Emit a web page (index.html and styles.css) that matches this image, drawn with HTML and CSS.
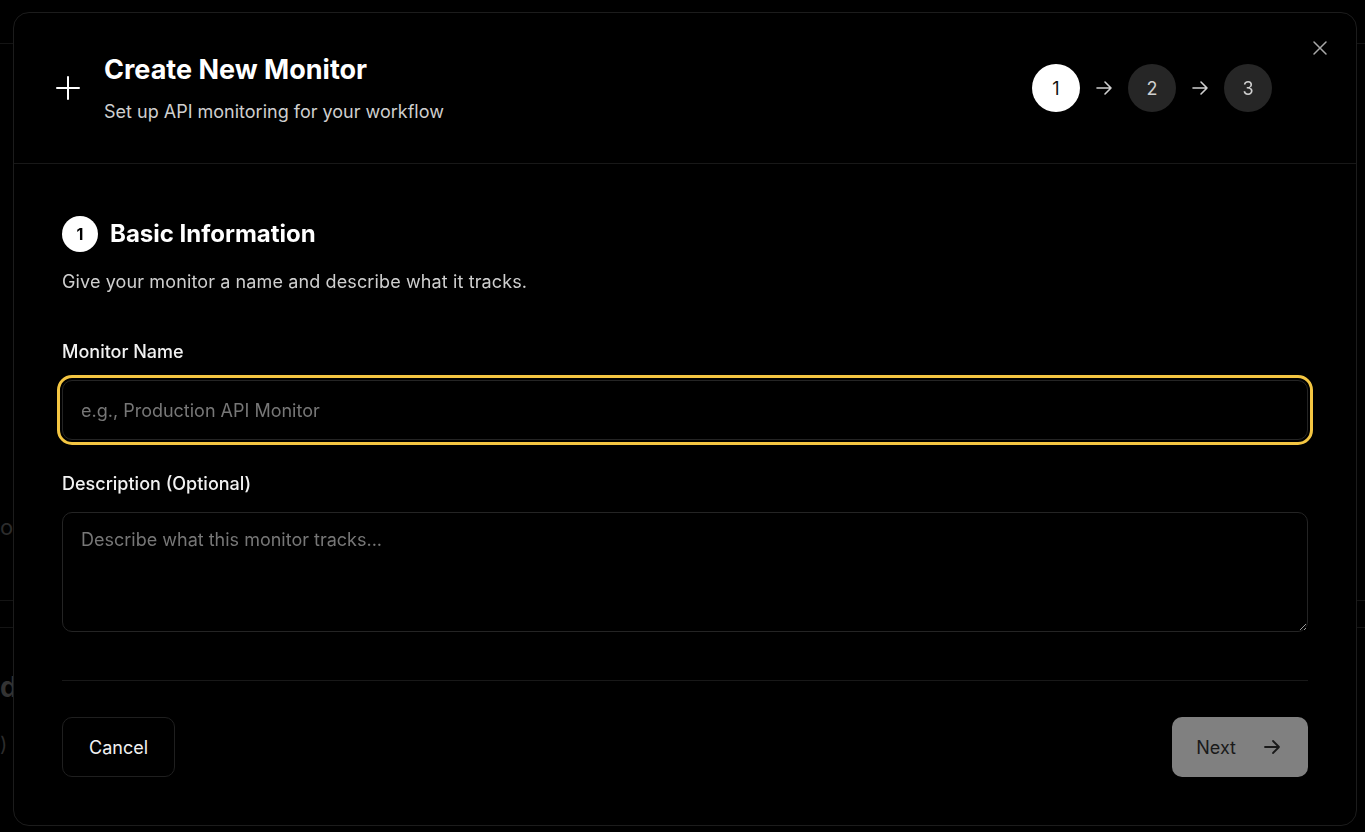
FILE: index.html
```html
<!DOCTYPE html>
<html lang="en">
<head>
    <meta charset="UTF-8">
    <meta name="viewport" content="width=device-width, initial-scale=1.0">
    <title>Create New Monitor</title>
    <link rel="stylesheet" href="styles.css">
</head>
<body>

<div class="page">
    <header class="page-header"></header>
    <main class="page-main">
        <div class="page-row page-row-text">or</div>
        <div class="page-row page-row-lines"></div>
        <div class="page-row page-row-title">d</div>
        <div class="page-row page-row-badge">)</div>
    </main>
</div>

<div class="overlay">
    <div class="modal">
        <button class="close-button" aria-label="Close">
            <svg width="16" height="16" viewBox="0 0 16 16" fill="none" stroke="currentColor" stroke-width="1.5" stroke-linecap="round">
                <path d="M2 2L14 14M14 2L2 14"/>
            </svg>
        </button>

        <div class="modal-header">
            <div class="header-title">
                <svg class="plus-icon" width="24" height="24" viewBox="0 0 24 24" fill="none" stroke="currentColor" stroke-width="2" stroke-linecap="round">
                    <path d="M12 1V23M1 12H23"/>
                </svg>
                <div>
                    <h1>Create New Monitor</h1>
                    <p class="subtitle">Set up API monitoring for your workflow</p>
                </div>
            </div>

            <div class="steps">
                <div class="step active">1</div>
                <svg class="step-arrow" width="18" height="18" viewBox="0 0 18 18" fill="none" stroke="currentColor" stroke-width="1.6" stroke-linecap="round" stroke-linejoin="round">
                    <path d="M2 9H16M10 3L16 9L10 15"/>
                </svg>
                <div class="step">2</div>
                <svg class="step-arrow" width="18" height="18" viewBox="0 0 18 18" fill="none" stroke="currentColor" stroke-width="1.6" stroke-linecap="round" stroke-linejoin="round">
                    <path d="M2 9H16M10 3L16 9L10 15"/>
                </svg>
                <div class="step">3</div>
            </div>
        </div>

        <div class="modal-body">
            <div class="section-title">
                <span class="section-number">1</span>
                <h2>Basic Information</h2>
            </div>
            <p class="section-desc">Give your monitor a name and describe what it tracks.</p>

            <div class="form-group">
                <label for="monitor-name">Monitor Name</label>
                <input type="text" id="monitor-name" class="field field-focus" placeholder="e.g., Production API Monitor">
            </div>

            <div class="form-group">
                <label for="monitor-desc">Description (Optional)</label>
                <textarea id="monitor-desc" class="field field-area" placeholder="Describe what this monitor tracks..."></textarea>
            </div>

            <div class="modal-footer">
                <button class="btn btn-cancel">Cancel</button>
                <button class="btn btn-next">
                    Next
                    <svg width="18" height="18" viewBox="0 0 18 18" fill="none" stroke="currentColor" stroke-width="1.8" stroke-linecap="round" stroke-linejoin="round">
                        <path d="M2 9H16M10 3L16 9L10 15"/>
                    </svg>
                </button>
            </div>
        </div>
    </div>
</div>

</body>
</html>
```

FILE: styles.css
```css
* {
    box-sizing: border-box;
}
body {
    font-family: 'Inter', 'Liberation Sans', sans-serif;
    margin: 0;
    padding: 0;
    background-color: #000;
    color: #fff;
    height: 832px;
    overflow: hidden;
}

/* page behind the dialog */
.page {
    height: 100%;
}
.page-header {
    height: 44px;
    border-bottom: 1px solid #141414;
}
.page-main {
    padding-top: 470px;
}
.page-row {
    color: #2c2c2c;
}
.page-row-text {
    font-size: 22px;
}
.page-row-lines {
    margin-top: 60px;
    height: 28px;
    border-top: 1px solid #141414;
    border-bottom: 1px solid #141414;
}
.page-row-title {
    margin-top: 42px;
    font-size: 28px;
    font-weight: 700;
    color: #333;
}
.page-row-badge {
    margin-top: 28px;
    font-size: 20px;
}

/* dialog */
.overlay {
    position: fixed;
    inset: 0;
    padding: 12px 8px 6px 13px;
}
.modal {
    position: relative;
    width: 1344px;
    height: 814px;
    background-color: #000;
    border: 1px solid #1c1c1c;
    border-radius: 16px;
    display: flex;
    flex-direction: column;
}
.close-button {
    position: absolute;
    top: 23px;
    right: 24px;
    width: 24px;
    height: 24px;
    padding: 4px;
    background: none;
    border: none;
    color: #a8a8a8;
    cursor: pointer;
}
.modal-header {
    display: flex;
    align-items: center;
    justify-content: space-between;
    padding: 41px 84px 37px 42px;
    border-bottom: 1px solid #181818;
}
.header-title {
    display: flex;
    align-items: center;
    gap: 24px;
}
.plus-icon {
    color: #fff;
    margin-bottom: 4px;
}
h1 {
    margin: 0;
    font-size: 27px;
    line-height: 32px;
    font-weight: 700;
}
.subtitle {
    margin: 12px 0 0;
    font-size: 18px;
    line-height: 28px;
    color: #cfcfcf;
}
.steps {
    display: flex;
    align-items: center;
    gap: 15px;
    margin-bottom: 4px;
}
.step {
    width: 48px;
    height: 48px;
    border-radius: 50%;
    background-color: #262626;
    color: #cfcfcf;
    display: flex;
    align-items: center;
    justify-content: center;
    font-size: 18px;
}
.step.active {
    background-color: #fff;
    color: #111;
}
.step-arrow {
    color: #cfcfcf;
}

.modal-body {
    flex: 1;
    padding: 52px 48px 0;
    display: flex;
    flex-direction: column;
}
.section-title {
    display: flex;
    align-items: center;
    gap: 12px;
}
.section-number {
    width: 36px;
    height: 36px;
    border-radius: 50%;
    background-color: #fff;
    color: #000;
    font-size: 16px;
    font-weight: 700;
    display: flex;
    align-items: center;
    justify-content: center;
}
h2 {
    margin: 0;
    font-size: 24px;
    line-height: 32px;
    font-weight: 700;
}
.section-desc {
    margin: 16px 0 0;
    font-size: 18px;
    line-height: 28px;
    letter-spacing: 0.12px;
    color: #cfcfcf;
}
.form-group {
    margin-top: 42px;
}
.form-group + .form-group {
    margin-top: 30px;
}
label {
    display: block;
    font-size: 18px;
    line-height: 28px;
    font-weight: 500;
    color: #f2f2f2;
    margin-bottom: 14px;
}
.field {
    display: block;
    width: 100%;
    font-family: inherit;
    font-size: 18px;
    line-height: 28px;
    color: #fff;
    background-color: #000;
    border: 1px solid #242424;
    border-radius: 10px;
}
.field::placeholder {
    color: #777;
}
.field-focus {
    height: 60px;
    padding: 0 18px;
    outline: 3px solid #f4c642;
    outline-offset: 2px;
}
.field-area {
    height: 120px;
    padding: 13px 18px;
    resize: vertical;
}
.field-area:focus,
.field-focus:focus {
    outline: 3px solid #f4c642;
    outline-offset: 2px;
}
.modal-footer {
    margin-top: 48px;
    padding-top: 36px;
    border-top: 1px solid #181818;
    display: flex;
    justify-content: space-between;
}
.btn {
    height: 60px;
    font-family: inherit;
    font-size: 18px;
    border-radius: 10px;
    cursor: pointer;
    display: flex;
    align-items: center;
}
.btn-cancel {
    padding: 0 26px;
    background-color: #000;
    color: #f2f2f2;
    border: 1px solid #1f1f1f;
}
.btn-next {
    padding: 0 27px 0 24px;
    gap: 27px;
    background-color: #808080;
    color: #1a1a1a;
    border: none;
}
```
